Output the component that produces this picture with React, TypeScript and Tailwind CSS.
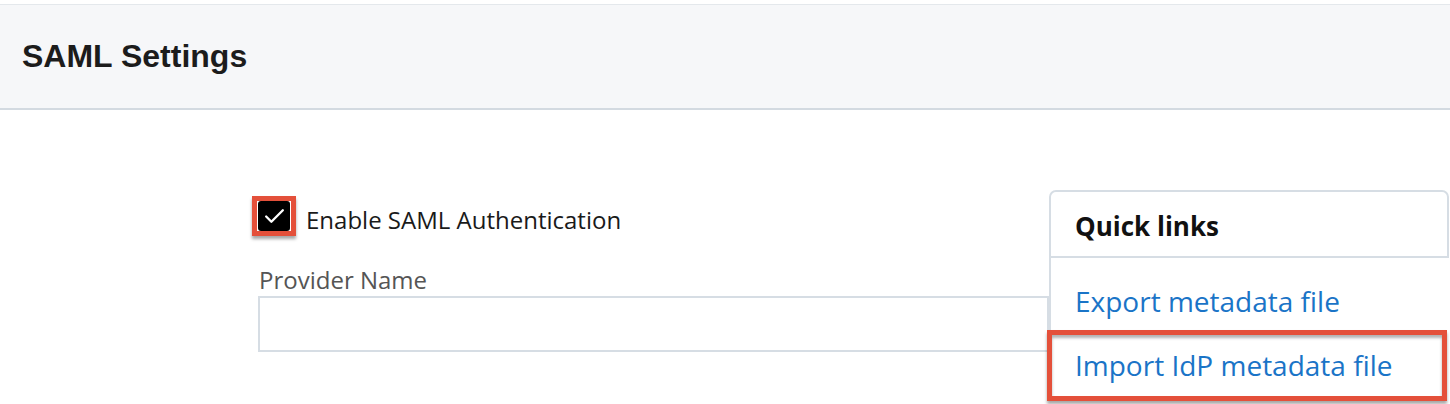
import { Check } from 'lucide-react';

export default function App() {
  return (
    <div className="min-h-[404px] bg-white pt-1 font-['Open_Sans',sans-serif] overflow-hidden">
      <div className="h-[106px] border-t border-b-2 border-t-[#e4e8ec] border-b-[#d3dae1] bg-[#f6f7f9] pl-[22px]">
        <h1 className="pt-[33px] font-['Liberation_Sans',Arial,sans-serif] text-[32px] font-bold leading-[37px] text-[#1c1c1c]">
          SAML Settings
        </h1>
      </div>

      <div className="flex">
        <div className="ml-[252px] mt-[86px] w-[797px]">
          <label className="flex items-start">
            <span className="flex h-[40px] w-[44px] items-center justify-center border-[5px] border-[#e4503a] bg-white shadow-[0_3px_3px_rgba(0,0,0,0.35)]">
              <span className="flex h-[30px] w-[32px] items-center justify-center rounded-[3px] bg-black">
                <Check className="h-[25px] w-[25px] text-white" strokeWidth={2.25} />
              </span>
            </span>
            <span className="ml-[10px] mt-[8px] text-[24px] leading-[32px] text-[#1a1a1a]">
              Enable SAML Authentication
            </span>
          </label>

          <div className="ml-[7px] mt-[28px] text-[24px] leading-[32px] text-[#555]">Provider Name</div>
          <div className="ml-[6px] h-[56px] border-2 border-[#d6dde4] bg-white" />
        </div>

        <div className="mt-[80px] w-[400px]">
          <div className="rounded-t-[7px] border-2 border-[#d6dde4] pl-[24px] pt-[17px] pb-[12px]">
            <h2 className="text-[26px] font-bold leading-[35px] text-[#111]">Quick links</h2>
          </div>
          <div className="border-l-2 border-[#d6dde4]">
            <a className="block pl-[24px] pt-[25px] text-[28px] leading-[37px] text-[#1a74c7]" href="#">
              Export metadata file
            </a>
            <div className="-ml-[4px] mt-[10px] mr-[2px] h-[71px] border-[5px] border-[#e4503a] pl-[23px] pt-[12px] shadow-[0_3px_3px_rgba(0,0,0,0.35),inset_0_3px_3px_rgba(0,0,0,0.3)]">
              <a className="block text-[28px] leading-[37px] text-[#1a74c7]" href="#">
                Import IdP metadata file
              </a>
            </div>
          </div>
        </div>
      </div>
    </div>
  );
}
